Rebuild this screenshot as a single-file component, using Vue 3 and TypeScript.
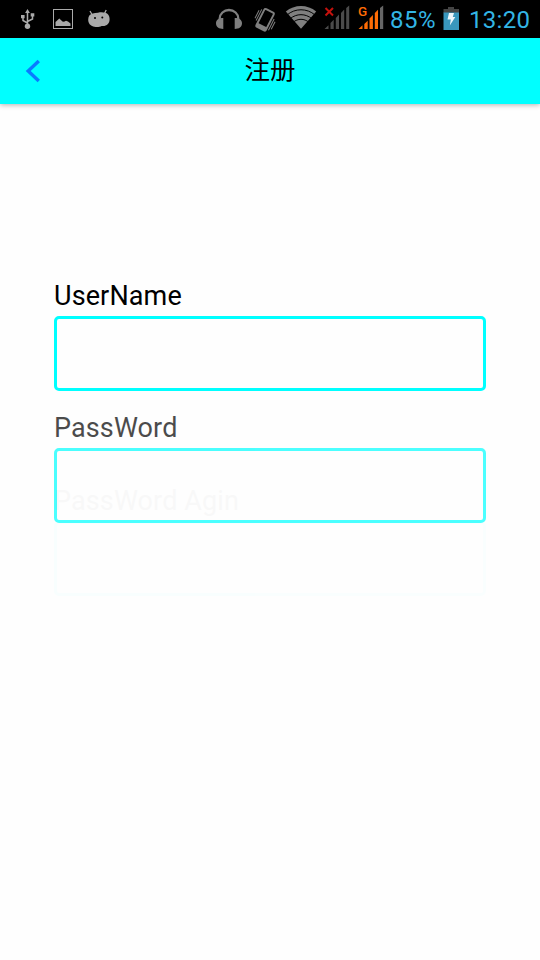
<script setup lang="ts">
import { ref } from 'vue'

interface Field {
  key: string
  label: string
}

const title = '注册'
const battery = '85%'
const time = '13:20'
const fields: Field[] = [
  { key: 'user', label: 'UserName' },
  { key: 'pass', label: 'PassWord' },
  { key: 'again', label: 'PassWord Agin' },
]
const values = ref<Record<string, string>>({ user: '', pass: '', again: '' })
</script>

<template>
  <div class="screen">
    <div class="status">
      <div class="group notices">
        <svg width="16" height="38" viewBox="20 0 16 38">
          <g fill="none" stroke="#aaa" stroke-width="1.5">
            <path d="M27.5 25V12M27.5 23L23 20.5V17M27.5 21.5L32.5 19V16" />
          </g>
          <path d="M27.5 9l2.400 4h-4.800zM21 15h3.600v3.200H21zM30.700 13.300h3.600v3.300h-3.600z" fill="#aaa" />
          <circle cx="27.500" cy="26.300" r="2.700" fill="#aaa" />
        </svg>
        <svg class="picture" width="20" height="38" viewBox="53 0 20 38">
          <rect x="53.500" y="9.500" width="19" height="19" fill="none" stroke="#aaa" />
          <path d="M55.500 26v-4l3.800-3.600 3.200 3.100 1.500.3 2-1 2 .6 2.500 2.100V26z" fill="#aaa" />
        </svg>
        <svg class="android" width="22" height="38" viewBox="88 0 22 38">
          <path d="M89.300 15.500C91 13.500 94 13 98 12.700c4-.8 8.500-.2 10.300 2 1.800 2.500 1.800 7-.4 9.300-1.800 1.800-4 2.300-6.300 1.900-1.500.8-3.500 1.200-6 1-3.500 0-6-1.800-7-4.600-.7-2-.5-4.900.7-6.800z" fill="#aaa" />
          <path d="M92 14.500l-2-3.500M104.500 13.500l1.700-3.500" stroke="#aaa" stroke-width="1.300" />
          <circle cx="95" cy="18" r="1" fill="#000" />
          <circle cx="102.300" cy="17.500" r="1" fill="#000" />
        </svg>
      </div>
      <div class="group system">
        <svg width="26" height="38" viewBox="216 0 26 38">
          <path d="M219.700 20v-1.500a9.300 8.500 0 0 1 18.600 0V20" fill="none" stroke="#7f7f7f" stroke-width="2.300" />
          <path d="M223.300 18v11c-4.300 0-7.300-2-7.300-5.700 0-3.500 3-5.300 7.300-5.300zM234.700 18v11c4.300 0 7.300-2 7.300-5.700 0-3.500-3-5.300-7.300-5.300z" fill="#7f7f7f" />
        </svg>
        <svg class="vibrate" width="22" height="38" viewBox="254 0 22 38">
          <g transform="rotate(27 265 20)">
            <rect x="259.700" y="9.800" width="10.600" height="20" rx="1.500" fill="none" stroke="#7f7f7f" stroke-width="1.900" />
            <path d="M259.700 25.800h10.600v4h-10.600z" fill="#7f7f7f" />
            <path d="M257.300 12v12.500M255.300 14v9M272.700 15v12.500M274.800 17v8.500" stroke="#7f7f7f" stroke-width="1" />
          </g>
        </svg>
        <svg class="wifi" width="32" height="38" viewBox="285 0 32 38">
          <path d="M301 28.800L285.800 11.600C294.500 4.200 307.500 4.200 316.200 11.600z" fill="#7f7f7f" />
          <g fill="none" stroke="#000" stroke-width="1">
            <path d="M287 15c8-7 20-7 28 0M290 18.800c6.500-5.500 15.500-5.500 22 0M293 22.300c5-4 11-4 16 0" />
          </g>
        </svg>
        <svg class="sim" width="26" height="38" viewBox="324 0 26 38">
          <path d="M324.500 29l4-3.800V29zM330.500 29v-6l3.200-3.200V29zM335.800 29V18l3.200-3.500V29zM341 29V13l3.200-3.500V29zM346.200 29V8l3-2.500V29z" fill="#4b4b4b" />
          <path d="M325.500 8l7.500 7.500m0-7.500l-7.500 7.500" stroke="#c4110c" stroke-width="2" />
        </svg>
        <svg class="sim" width="26" height="38" viewBox="358 0 26 38">
          <path d="M358.500 29l4-3.800V29zM364.300 29v-5l3.400-3.200V29zM369.500 29V18.500l3.400-3.400V29zM374.800 29V13l3.200-3.200V29z" fill="#ff6c05" />
          <path d="M380 29V8l3.200-2.500V29z" fill="#666" />
          <text x="358" y="16" class="net">G</text>
        </svg>
        <span class="pct">{{ battery }}</span>
        <svg class="battery" width="17" height="38" viewBox="443 0 17 38">
          <path d="M448 7h6v2h5v4h-15.500V9h4.500z" fill="#444" />
          <path d="M443.500 12.500H459V30h-15.500z" fill="#3997bd" />
          <path d="M449 13h5l-1.200 4h2.500l-5.500 8.500 1-6h-3.300z" fill="#eef7fb" />
        </svg>
        <span class="clock">{{ time }}</span>
      </div>
    </div>

    <header class="bar">
      <svg class="back" width="16" height="24" viewBox="25 59 16 24">
        <path d="M38.800 61L28.200 71l10.600 10" fill="none" stroke="#0a7aff" stroke-width="3.400" />
      </svg>
      <h1>{{ title }}</h1>
    </header>

    <main class="form">
      <label v-for="f in fields" :key="f.key" class="field" :class="f.key">
        <span>{{ f.label }}</span>
        <input v-model="values[f.key]" :type="f.key === 'user' ? 'text' : 'password'" />
      </label>
    </main>
  </div>
</template>

<style>
body {
  margin: 0;
  background: #fefefe;
}
</style>

<style scoped>
.screen {
  width: 540px;
  height: 960px;
  overflow: hidden;
  display: flex;
  flex-direction: column;
  background: #fefefe;
  font-family: Roboto, "Noto Sans CJK SC", sans-serif;
  color: #000;
}
.status {
  height: 38px;
  flex: none;
  display: flex;
  justify-content: space-between;
  background: #000;
  color: #33b5e5;
}
.group {
  display: flex;
}
.group svg {
  flex: none;
}
.notices {
  padding-left: 20px;
}
.picture { margin-left: 17px; }
.android { margin-left: 15px; }
.vibrate { margin-left: 12px; overflow: visible; }
.wifi { margin-left: 9px; }
.sim { margin-left: 8px; }
.wifi + .sim { margin-left: 7px; }
.net {
  font: 500 13.500px Roboto, sans-serif;
  fill: #ff6c05;
}
.pct,
.clock {
  font-size: 24px;
  line-height: 40px;
  white-space: nowrap;
}
.pct {
  width: 53px;
  margin-left: 6px;
  letter-spacing: 0.500px;
}
.clock {
  width: 71px;
  margin-left: 9px;
  letter-spacing: 0.300px;
}
.bar {
  height: 66px;
  flex: none;
  display: grid;
  grid-template-columns: 54px 1fr 54px;
  align-items: center;
  background: #0ff;
  box-shadow: 0 1px 5px rgba(0, 0, 0, 0.300);
}
.back {
  margin-left: 25px;
}
h1 {
  grid-column: 2;
  margin: 0;
  padding-bottom: 6px;
  text-align: center;
  font: 400 25.500px/58px "Noto Sans CJK SC", sans-serif;
}
.form {
  display: flex;
  flex-direction: column;
  padding: 176px 54px 0;
}
.field {
  display: flex;
  flex-direction: column;
}
.field span {
  height: 36px;
  line-height: 32px;
  font-size: 27px;
  letter-spacing: 0.120px;
}
.field input {
  box-sizing: border-box;
  width: 100%;
  height: 75px;
  margin: 0;
  padding: 0 12px;
  border: 3px solid #0ff;
  border-radius: 5px;
  background: transparent;
  font: 27px Roboto, sans-serif;
  outline: none;
}
.pass {
  margin-top: 21px;
  opacity: 0.700;
}
.again {
  margin-top: -38px;
  opacity: 0.020;
}
</style>
